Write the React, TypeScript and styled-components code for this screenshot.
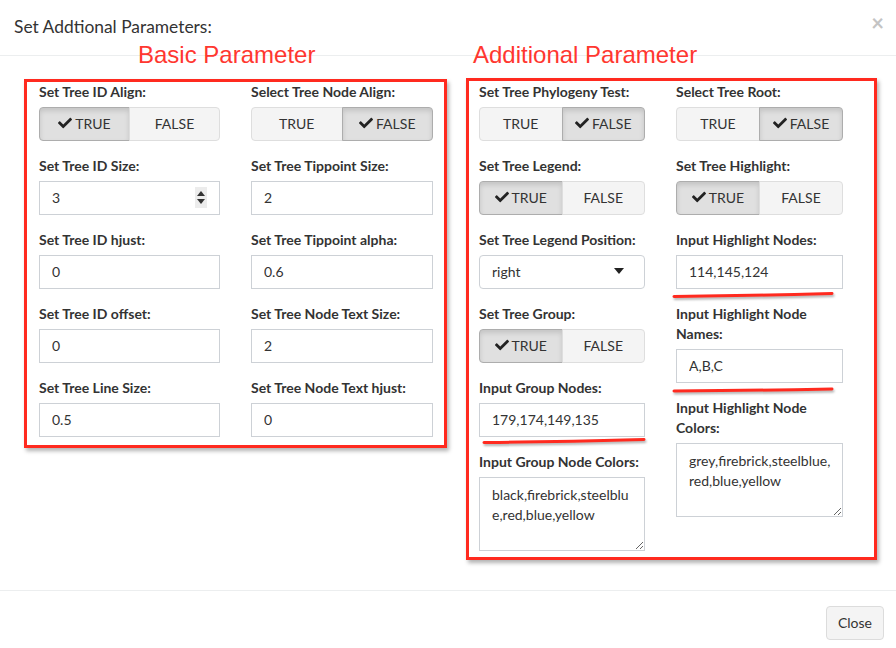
import React from 'react';
import styled, { createGlobalStyle } from 'styled-components';

const Global = createGlobalStyle`
  html, body { margin: 0; padding: 0; background: #fff; }
  body { font-family: Lato, "Noto Sans", sans-serif; color: #333; }
  * { box-sizing: border-box; }
`;

const Modal = styled.div`
  width: 896px;
  height: 648px;
  display: flex;
  flex-direction: column;
  background: #fff;
  overflow: hidden;
`;

const Header = styled.div`
  height: 56px;
  flex: none;
  padding: 0 12px 0 14px;
  display: flex;
  align-items: center;
  justify-content: space-between;
  border-bottom: 1px solid #eceeef;
`;

const Title = styled.h4`
  margin: 0 0 2px;
  font-size: 17.4px;
  font-weight: 400;
  color: #333;
  line-height: 20px;
`;

const CloseX = styled.span`
  font-size: 22px;
  font-weight: 700;
  color: #c4c4c4;
  line-height: 1;
  margin-bottom: 10px;
`;

const Body = styled.div`
  flex: 1;
  display: flex;
  gap: 19px;
  padding-left: 24px;
`;

const Section = styled.div`
  display: flex;
  flex-direction: column;
`;

const Annotation = styled.div<{ $indent: number; $below: number }>`
  margin-top: -15px;
  padding-left: ${p => p.$indent}px;
  margin-bottom: ${p => p.$below}px;
  font-family: "Liberation Sans", Arial, sans-serif;
  font-size: 24px;
  line-height: 28px;
  color: #ff3730;
`;

const RedBox = styled.div<{ $cols: string; $pad: string }>`
  border: 3px solid #ff2a1f;
  box-shadow: 2px 3px 4px rgba(0, 0, 0, 0.3);
  display: grid;
  grid-template-columns: ${p => p.$cols};
  column-gap: 31px;
  padding: ${p => p.$pad};
  align-items: start;
`;

const Column = styled.div`
  display: flex;
  flex-direction: column;
  gap: 15px;
`;

const Field = styled.div`
  display: flex;
  flex-direction: column;
  gap: 5px;
`;

const Label = styled.label`
  font-weight: 700;
  font-size: 14px;
  line-height: 20px;
  color: #333;
`;

const ControlWrap = styled.div`
  position: relative;
`;

const Group = styled.div`
  display: flex;
  height: 34px;
`;

const ToggleBtn = styled.button<{ $active: boolean }>`
  flex: 1;
  height: 34px;
  display: flex;
  align-items: center;
  justify-content: center;
  gap: 3px;
  font-family: inherit;
  font-size: 14px;
  color: #333;
  border: 1px solid ${p => (p.$active ? '#adadad' : '#dedede')};
  background: ${p => (p.$active ? '#e0e0e0' : '#f4f4f4')};
  box-shadow: ${p => (p.$active ? 'inset 0 3px 5px rgba(0,0,0,0.125)' : 'none')};
  padding: 0 0 2px;
  &:first-child { border-radius: 4px 0 0 4px; }
  &:last-child { border-radius: 0 4px 4px 0; margin-left: -1px; }
`;

const TextInput = styled.input`
  display: block;
  width: 100%;
  height: 34px;
  border: 1px solid #cdd1d6;
  border-radius: 0;
  padding: 0 12px 2px;
  font-family: inherit;
  font-size: 14px;
  color: #333;
  background: #fff;
  outline: none;
`;

const Spinner = styled.div`
  position: absolute;
  right: 13px;
  top: 6px;
  width: 12px;
  height: 21px;
  background: #ececec;
  display: flex;
  flex-direction: column;
  align-items: center;
  justify-content: center;
  gap: 3px;
`;

const Arrow = styled.span<{ $up: boolean }>`
  width: 0;
  height: 0;
  border-left: 4px solid transparent;
  border-right: 4px solid transparent;
  ${p => (p.$up ? 'border-bottom: 5px solid #333;' : 'border-top: 5px solid #333;')}
`;

const SelectBox = styled.div`
  height: 34px;
  border: 1px solid #cdd1d6;
  border-radius: 4px;
  padding: 0 20px 2px 12px;
  display: flex;
  align-items: center;
  justify-content: space-between;
  font-size: 14px;
  color: #333;
  background: #fff;
`;

const Caret = styled.span`
  width: 0;
  height: 0;
  border-left: 5px solid transparent;
  border-right: 5px solid transparent;
  border-top: 6px solid #222;
`;

const Area = styled.textarea`
  display: block;
  width: 100%;
  height: 74px;
  border: 1px solid #cdd1d6;
  border-radius: 0;
  padding: 7px 8px 7px 12px;
  font-family: inherit;
  font-size: 14px;
  line-height: 20px;
  color: #333;
  background: #fff;
  outline: none;
`;

const Underline = styled.svg`
  position: absolute;
  top: 100%;
  overflow: visible;
  filter: drop-shadow(1px 2px 1px rgba(0, 0, 0, 0.3));
`;

const Footer = styled.div`
  height: 58px;
  flex: none;
  border-top: 1px solid #eceeef;
  padding: 15px 12px 0;
  display: flex;
  justify-content: flex-end;
  align-items: flex-start;
`;

const FooterBtn = styled.button`
  height: 34px;
  width: 58px;
  border: 1px solid #dcdcdc;
  border-radius: 4px;
  background: #f4f4f4;
  font-family: inherit;
  font-size: 14px;
  color: #333;
  padding: 0 0 2px;
`;

const Check = () => (
  <svg width="14" height="14" viewBox="0 0 512 512" aria-hidden="true">
    <path
      fill="#222"
      d="M173.898 439.404l-166.4-166.4c-9.997-9.997-9.997-26.206 0-36.204l36.203-36.204c9.997-9.998 26.207-9.998 36.204 0L192 312.69 432.095 72.596c9.997-9.997 26.207-9.997 36.204 0l36.203 36.204c9.997 9.997 9.997 26.206 0 36.204l-294.4 294.401c-9.998 9.997-26.207 9.997-36.204-.001z"
    />
  </svg>
);

const Toggle = ({ label, value }: { label: string; value: boolean }) => (
  <Field>
    <Label>{label}</Label>
    <Group>
      <ToggleBtn $active={value}>
        {value && <Check />}TRUE
      </ToggleBtn>
      <ToggleBtn $active={!value}>
        {!value && <Check />}FALSE
      </ToggleBtn>
    </Group>
  </Field>
);

type Mark = { width: number; dy: number; offset: number; left: number };

const Stroke = ({ width, dy, offset, left }: Mark) => (
  <Underline width={width} height={8} style={{ marginTop: offset, left }}>
    <path
      d={`M2 ${4 + dy / 2} Q ${width / 2} ${4 + dy / 4} ${width - 2} ${4 - dy / 2}`}
      stroke="#ff2a1f"
      strokeWidth={3}
      fill="none"
      strokeLinecap="round"
    />
  </Underline>
);

const Text = ({
  label,
  value,
  spinner,
  mark,
}: {
  label: string;
  value: string;
  spinner?: boolean;
  mark?: Mark;
}) => (
  <Field>
    <Label>{label}</Label>
    <ControlWrap>
      <TextInput defaultValue={value} />
      {spinner && (
        <Spinner>
          <Arrow $up />
          <Arrow $up={false} />
        </Spinner>
      )}
      {mark && <Stroke {...mark} />}
    </ControlWrap>
  </Field>
);

const TextArea = ({ label, value }: { label: string; value: string }) => (
  <Field>
    <Label>{label}</Label>
    <Area defaultValue={value} />
  </Field>
);

export default function App() {
  return (
    <>
      <Global />
      <Modal>
        <Header>
          <Title>Set Addtional Parameters:</Title>
          <CloseX>×</CloseX>
        </Header>
        <Body>
          <Section>
            <Annotation $indent={114} $below={10}>Basic Parameter</Annotation>
            <RedBox $cols="181px 182px" $pad="0 11px 8px 12px">
              <Column>
                <Toggle label="Set Tree ID Align:" value={true} />
                <Text label="Set Tree ID Size:" value="3" spinner />
                <Text label="Set Tree ID hjust:" value="0" />
                <Text label="Set Tree ID offset:" value="0" />
                <Text label="Set Tree Line Size:" value="0.5" />
              </Column>
              <Column>
                <Toggle label="Select Tree Node Align:" value={false} />
                <Text label="Set Tree Tippoint Size:" value="2" />
                <Text label="Set Tree Tippoint alpha:" value="0.6" />
                <Text label="Set Tree Node Text Size:" value="2" />
                <Text label="Set Tree Node Text hjust:" value="0" />
              </Column>
            </RedBox>
          </Section>
          <Section>
            <Annotation $indent={7} $below={9}>Additional Parameter</Annotation>
            <RedBox $cols="166px 167px" $pad="1px 31px 6px 10px">
              <Column>
                <Toggle label="Set Tree Phylogeny Test:" value={false} />
                <Toggle label="Set Tree Legend:" value={true} />
                <Field>
                  <Label>Set Tree Legend Position:</Label>
                  <SelectBox>
                    <span>right</span>
                    <Caret />
                  </SelectBox>
                </Field>
                <Toggle label="Set Tree Group:" value={true} />
                <Text
                  label="Input Group Nodes:"
                  value="179,174,149,135"
                  mark={{ width: 164, dy: 3, offset: 0, left: 3 }}
                />
                <TextArea label="Input Group Node Colors:" value="black,firebrick,steelblue,red,blue,yellow" />
              </Column>
              <Column>
                <Toggle label="Select Tree Root:" value={false} />
                <Toggle label="Set Tree Highlight:" value={true} />
                <Text
                  label="Input Highlight Nodes:"
                  value="114,145,124"
                  mark={{ width: 162, dy: 3, offset: 2, left: -4 }}
                />
                <Text
                  label="Input Highlight Node Names:"
                  value="A,B,C"
                  mark={{ width: 162, dy: 2, offset: 3, left: -4 }}
                />
                <TextArea label="Input Highlight Node Colors:" value="grey,firebrick,steelblue,red,blue,yellow" />
              </Column>
            </RedBox>
          </Section>
        </Body>
        <Footer>
          <FooterBtn>Close</FooterBtn>
        </Footer>
      </Modal>
    </>
  );
}
